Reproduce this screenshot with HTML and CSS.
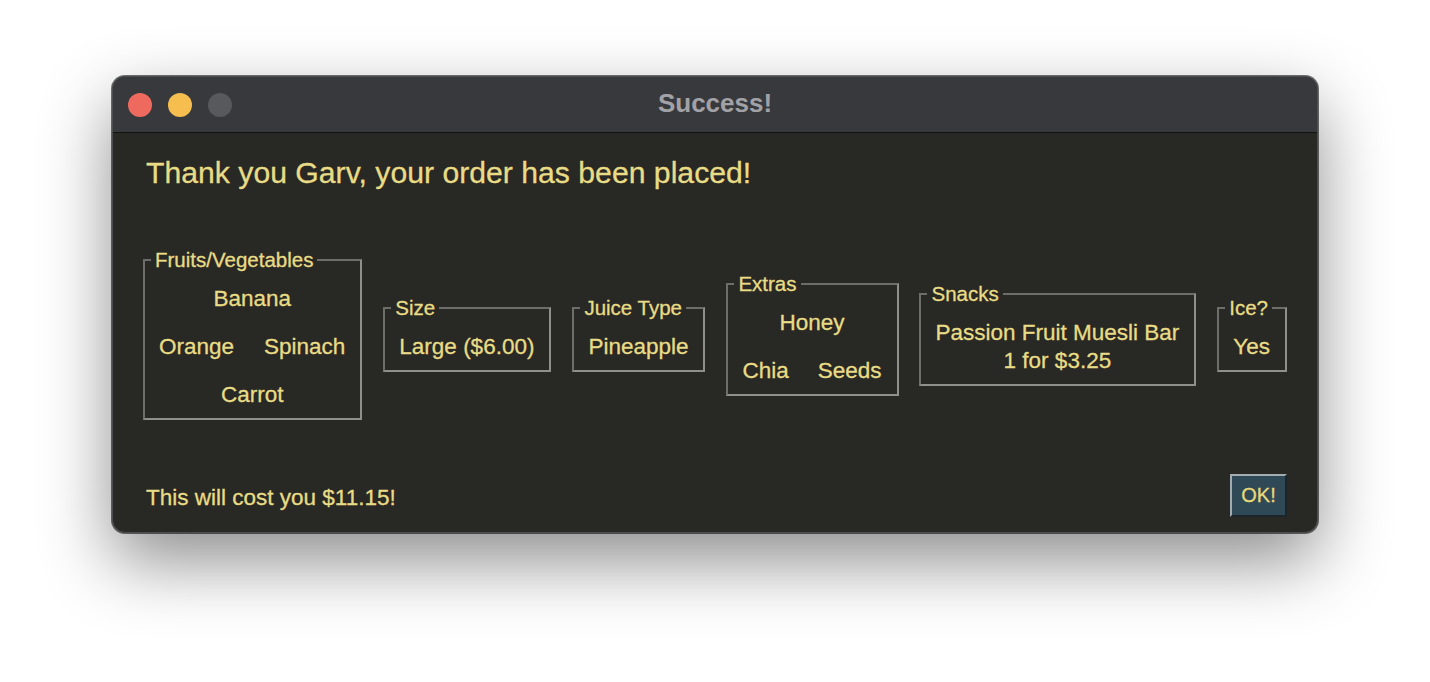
FILE: index.html
```html
<!DOCTYPE html>
<html>
<head>
<meta charset="utf-8">
<link rel="stylesheet" href="styles.css">
</head>
<body>
<div class="window">
  <div class="titlebar">
    <div class="lights">
      <span class="light red"></span>
      <span class="light yellow"></span>
      <span class="light gray"></span>
    </div>
    <div class="title">Success!</div>
    <div class="spacer"></div>
  </div>
  <div class="content">
    <h1 class="heading">Thank you Garv, your order has been placed!</h1>
    <div class="groups">
      <fieldset class="group">
        <legend>Fruits/Vegetables</legend>
        <div class="group-body pair fruits">
          <span class="full">Banana</span>
          <span>Orange</span>
          <span>Spinach</span>
          <span class="full">Carrot</span>
        </div>
      </fieldset>
      <fieldset class="group">
        <legend>Size</legend>
        <div class="group-body">Large ($6.00)</div>
      </fieldset>
      <fieldset class="group">
        <legend>Juice Type</legend>
        <div class="group-body">Pineapple</div>
      </fieldset>
      <fieldset class="group">
        <legend>Extras</legend>
        <div class="group-body pair extras">
          <span class="full">Honey</span>
          <span>Chia</span>
          <span>Seeds</span>
        </div>
      </fieldset>
      <fieldset class="group">
        <legend>Snacks</legend>
        <div class="group-body snacks">Passion Fruit Muesli Bar<br>1 for $3.25</div>
      </fieldset>
      <fieldset class="group">
        <legend>Ice?</legend>
        <div class="group-body">Yes</div>
      </fieldset>
    </div>
    <div class="footer">
      <span class="cost">This will cost you $11.15!</span>
      <button class="ok">OK!</button>
    </div>
  </div>
</div>
</body>
</html>
```

FILE: styles.css
```css
html, body {
  margin: 0;
  padding: 0;
}
body {
  width: 1430px;
  height: 682px;
  overflow: hidden;
  background: #ffffff;
  font-family: "Liberation Sans", Arial, Helvetica, sans-serif;
  padding: 76px 0 0 112px;
  box-sizing: border-box;
}
.window {
  box-sizing: border-box;
  width: 1206px;
  height: 457px;
  border: 1px solid #4d4d50;
  border-radius: 13px;
  overflow: hidden;
  background: #282824;
  box-shadow: 0 28px 70px rgba(0, 0, 0, 0.45), 0 0 0 1px rgba(0, 0, 0, 0.55);
}
.titlebar {
  height: 55px;
  background: #38393d;
  border-bottom: 1px solid #121212;
  display: grid;
  grid-template-columns: 1fr auto 1fr;
  align-items: center;
}
.lights {
  display: flex;
  gap: 16px;
  padding-left: 15px;
}
.light {
  width: 24px;
  height: 24px;
  border-radius: 50%;
  display: block;
}
.red { background: #ee6a5f; }
.yellow { background: #f5be4f; }
.gray { background: #58595d; }
.title {
  color: #a2a2a6;
  font-weight: bold;
  font-size: 26px;
  line-height: 26px;
  margin-bottom: 4px;
}
.content {
  height: 399px;
  box-sizing: border-box;
  padding: 0 30px;
  display: flex;
  flex-direction: column;
  color: #e8dc86;
  -webkit-text-stroke: 0.3px #e8dc86;
}
.heading {
  margin: 22px 0 0 3px;
  font-size: 30.2px;
  line-height: 36px;
  font-weight: normal;
}
.groups {
  margin-top: 59px;
  display: flex;
  justify-content: space-between;
  align-items: center;
}
.group {
  margin: 0;
  padding: 0;
  border: 2px solid;
  border-color: #6d6d69 #8f8f8b #8f8f8b #6d6d69;
  min-width: 0;
}
.group legend {
  margin-left: 6px;
  padding: 0 4px;
  font-size: 20.5px;
  line-height: 20px;
}
.group-body {
  padding: 15px 15px 9px 14px;
  font-size: 22.5px;
  line-height: 28px;
  text-align: center;
  white-space: nowrap;
}
.pair {
  display: grid;
  grid-template-columns: auto auto;
  row-gap: 20px;
}
.fruits { column-gap: 30px; }
.extras { column-gap: 29px; }
.full {
  grid-column: 1 / -1;
  justify-self: center;
}
.footer {
  margin-top: 54px;
  display: flex;
  justify-content: space-between;
  align-items: center;
  padding-left: 3px;
}
.cost {
  margin-top: 4px;
  font-size: 22.5px;
  line-height: 28px;
}
.ok {
  box-sizing: border-box;
  width: 57px;
  height: 43px;
  background: #2f4a56;
  color: #e8d97a;
  -webkit-text-stroke: 0.3px #e8d97a;
  border: 2px solid;
  border-color: #a3abb0 #1c252a #1c252a #a3abb0;
  font-family: "Liberation Sans", Arial, Helvetica, sans-serif;
  font-size: 20px;
  padding: 0;
}
```
